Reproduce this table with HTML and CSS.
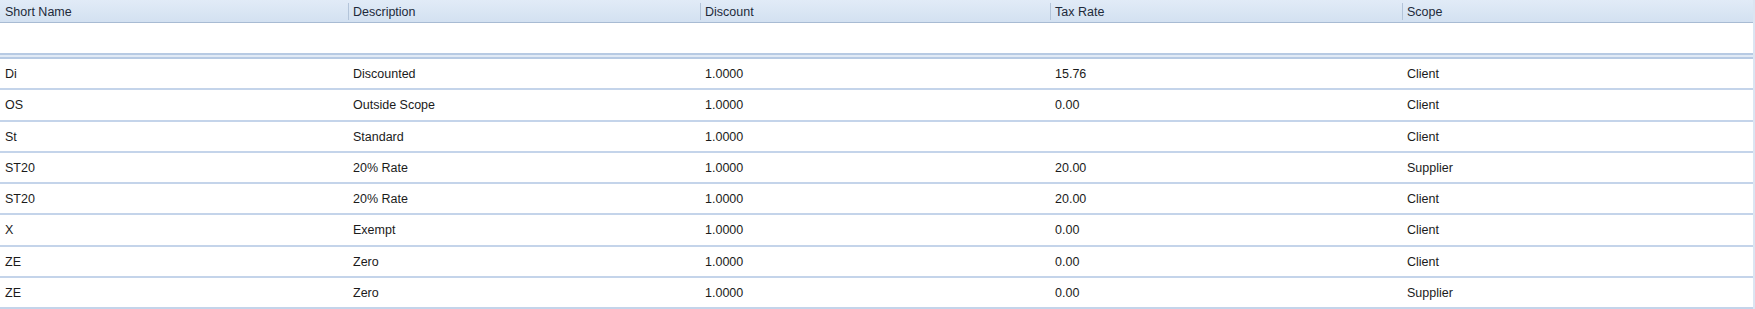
FILE: index.html
```html
<!DOCTYPE html>
<html>
<head>
<meta charset="utf-8">
<link rel="stylesheet" href="styles.css">
</head>
<body>
<div class="grid">
  <div class="head">
    <div class="hcell first">Short Name</div>
    <div class="hcell"><span class="sep"></span>Description</div>
    <div class="hcell"><span class="sep"></span>Discount</div>
    <div class="hcell"><span class="sep"></span>Tax Rate</div>
    <div class="hcell"><span class="sep"></span>Scope</div>
  </div>
  <div class="filter"></div>
  <div class="split"></div>
  <div class="row"><div class="cell">Di</div><div class="cell">Discounted</div><div class="cell">1.0000</div><div class="cell">15.76</div><div class="cell">Client</div></div>
  <div class="row"><div class="cell">OS</div><div class="cell">Outside Scope</div><div class="cell">1.0000</div><div class="cell">0.00</div><div class="cell">Client</div></div>
  <div class="row"><div class="cell">St</div><div class="cell">Standard</div><div class="cell">1.0000</div><div class="cell"></div><div class="cell">Client</div></div>
  <div class="row"><div class="cell">ST20</div><div class="cell">20% Rate</div><div class="cell">1.0000</div><div class="cell">20.00</div><div class="cell">Supplier</div></div>
  <div class="row"><div class="cell">ST20</div><div class="cell">20% Rate</div><div class="cell">1.0000</div><div class="cell">20.00</div><div class="cell">Client</div></div>
  <div class="row"><div class="cell">X</div><div class="cell">Exempt</div><div class="cell">1.0000</div><div class="cell">0.00</div><div class="cell">Client</div></div>
  <div class="row"><div class="cell">ZE</div><div class="cell">Zero</div><div class="cell">1.0000</div><div class="cell">0.00</div><div class="cell">Client</div></div>
  <div class="row"><div class="cell">ZE</div><div class="cell">Zero</div><div class="cell">1.0000</div><div class="cell">0.00</div><div class="cell">Supplier</div></div>
</div>
</body>
</html>
```
FILE: styles.css
```css
html, body {
  margin: 0;
  padding: 0;
  background: #ffffff;
}
body {
  font-family: "Liberation Sans", Arial, sans-serif;
  font-size: 12.5px;
  color: #1b1b1b;
  height: 309px;
  overflow: hidden;
}
.grid {
  width: 1753px;
  border-right: 2px solid #dbe5f2;
}
.head {
  display: grid;
  grid-template-columns: 348px 352px 350px 352px 351px;
  height: 22px;
  background: linear-gradient(#e1ebf7, #d3e1f1);
  border-bottom: 1px solid #a8bbd3;
}
.hcell {
  display: flex;
  align-items: center;
  gap: 4px;
  padding-top: 1px;
  color: #1e2a3a;
}
.hcell.first {
  padding-left: 5px;
}
.sep {
  width: 1px;
  height: 17px;
  margin-top: -1px;
  background: #b3c4d9;
}
.filter {
  height: 30px;
  background: #ffffff;
}
.split {
  height: 2px;
  background: #e1eaf5;
  border-top: 2px solid #b7cae3;
  border-bottom: 2px solid #b7cae3;
}
.row {
  display: grid;
  grid-template-columns: 348px 352px 350px 352px 351px;
  height: 31.25px;
  box-sizing: border-box;
  border-bottom: 2px solid #c4d4ea;
}
.cell {
  display: flex;
  align-items: center;
  padding-left: 5px;
  padding-top: 1px;
  white-space: nowrap;
}
```
